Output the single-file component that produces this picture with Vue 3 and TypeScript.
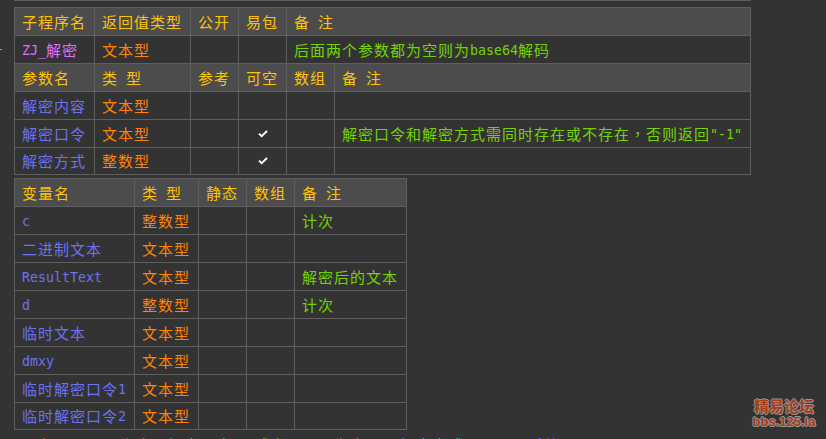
<script setup lang="ts">
interface Seg { text: string; kind: 'cjk' | 'latin' | 'punct' }
interface Cell { segs?: Seg[]; tone?: string; check?: boolean }
type Row = Cell[]

function split(text: string): Seg[] {
  const parts = text.match(/[\x20-\x7e]+|\uFF0C|[^\x20-\x7e\uFF0C]+/g) ?? []
  return parts.map((p): Seg => ({
    text: p,
    kind: /^[\x20-\x7e]/.test(p) ? 'latin' : p === '\uFF0C' ? 'punct' : 'cjk',
  }))
}
const cell = (tone: string) => (t: string): Cell => ({ segs: split(t), tone })
const sub = cell('sub')
const head = cell('head')
const type = cell('type')
const name = cell('name')
const note = cell('note')
const none: Cell = {}
const tick: Cell = { check: true }

const subHeader: Row = ['子程序名', '返回值类型', '公开', '易包', '备 注'].map(head)
const subRow: Row = [sub('ZJ_解密'), type('文本型'), none, none, note('后面两个参数都为空则为base64解码')]
const paramHeader: Row = ['参数名', '类 型', '参考', '可空', '数组', '备 注'].map(head)
const paramRows: Row[] = [
  [name('解密内容'), type('文本型'), none, none, none, none],
  [name('解密口令'), type('文本型'), none, tick, none, note('解密口令和解密方式需同时存在或不存在\uFF0C否则返回"-1"')],
  [name('解密方式'), type('整数型'), none, tick, none, none],
]
const varHeader: Row = ['变量名', '类 型', '静态', '数组', '备 注'].map(head)
const varRows: Row[] = [
  [name('c'), type('整数型'), none, none, note('计次')],
  [name('二进制文本'), type('文本型'), none, none, none],
  [name('ResultText'), type('文本型'), none, none, note('解密后的文本')],
  [name('d'), type('整数型'), none, none, note('计次')],
  [name('临时文本'), type('文本型'), none, none, none],
  [name('dmxy'), type('文本型'), none, none, none],
  [name('临时解密口令1'), type('文本型'), none, none, none],
  [name('临时解密口令2'), type('文本型'), none, none, none],
]
const clipped = [
  { text: '如果', tone: 'red', gap: 0 },
  { text: '是否为空', tone: 'red', gap: 16 },
  { text: '解密口令', tone: 'cyan', gap: 16 },
  { text: '或者', tone: 'lime', gap: 23 },
  { text: '是否为空', tone: 'red', gap: 15 },
  { text: '解密方式', tone: 'cyan', gap: 34 },
  { text: '赋值', tone: 'violet', gap: 64 },
]
</script>

<template>
  <main class="page">
    <div class="top-rule"></div>
    <span class="tick-mark"></span>

    <section class="block sub-block">
      <div class="row cols-sub header">
        <div v-for="(c, i) in subHeader" :key="i" class="cell" :class="c.tone"><span v-for="(s, j) in c.segs" :key="j" :class="s.kind">{{ s.text }}</span></div>
      </div>
      <div class="row cols-sub">
        <div v-for="(c, i) in subRow" :key="i" class="cell" :class="c.tone"><span v-for="(s, j) in c.segs" :key="j" :class="s.kind">{{ s.text }}</span></div>
      </div>
      <div class="row cols-param header">
        <div v-for="(c, i) in paramHeader" :key="i" class="cell" :class="c.tone"><span v-for="(s, j) in c.segs" :key="j" :class="s.kind">{{ s.text }}</span></div>
      </div>
      <div v-for="(r, ri) in paramRows" :key="ri" class="row cols-param">
        <div v-for="(c, i) in r" :key="i" class="cell" :class="[c.tone, { center: c.check }]">
          <svg v-if="c.check" class="check" width="10" height="8" viewBox="0 0 10 8"><path d="M1 3.6 L3.7 6.2 L9 1" fill="none" stroke="#fff" stroke-width="2"/></svg>
          <span v-for="(s, j) in c.segs" :key="j" :class="s.kind">{{ s.text }}</span>
        </div>
      </div>
    </section>

    <section class="block var-block">
      <div class="row cols-var header">
        <div v-for="(c, i) in varHeader" :key="i" class="cell" :class="c.tone"><span v-for="(s, j) in c.segs" :key="j" :class="s.kind">{{ s.text }}</span></div>
      </div>
      <div v-for="(r, ri) in varRows" :key="ri" class="row cols-var">
        <div v-for="(c, i) in r" :key="i" class="cell" :class="c.tone"><span v-for="(s, j) in c.segs" :key="j" :class="s.kind">{{ s.text }}</span></div>
      </div>
    </section>

    <div class="clipped-line">
      <span v-for="(c, i) in clipped" :key="i" class="cjk" :class="c.tone" :style="{ marginLeft: c.gap + 'px' }">{{ c.text }}</span>
    </div>

    <div class="watermark"><span>精易论坛</span><span>bbs.125.la</span></div>
  </main>
</template>

<style scoped>
.page {
  position: relative;
  width: 826px;
  height: 439px;
  overflow: hidden;
  background: #333333;
  font-family: "DejaVu Sans Mono", "Noto Sans CJK SC", monospace;
  font-size: 14px;
}
.top-rule { height: 1px; margin-left: 14px; width: 737px; background: #5f5f5f; }
.tick-mark { position: absolute; left: 0; top: 49px; width: 2px; height: 1px; background: #6fd000; }
.block { margin-left: 14px; border: 1px solid #5f5f5f; }
.sub-block { width: 735px; margin-top: 6px; }
.var-block { width: 391px; margin-top: 3px; }
.row { display: grid; height: 28px; border-top: 1px solid #5f5f5f; box-sizing: border-box; }
.row:first-child { border-top: 0; height: 27px; }
.row:last-child { height: 27px; }
.header { background: #4c4c4c; }
.cols-sub { grid-template-columns: 79px 96px 48px 48px 1fr; }
.cols-param { grid-template-columns: 79px 96px 48px 48px 48px 1fr; }
.cols-var { grid-template-columns: 119px 64px 48px 48px 1fr; }
.cell {
  display: flex;
  align-items: center;
  padding-left: 7px;
  border-left: 1px solid #5f5f5f;
  white-space: pre;
  min-width: 0;
}
.cell:first-child { border-left: 0; }
.center { justify-content: center; padding-left: 0; }
.cjk {
  font-family: "Noto Sans CJK SC", sans-serif;
  font-size: 15px;
  letter-spacing: 1px;
  line-height: 20px;
}
.punct {
  font-family: "Noto Sans CJK TC", sans-serif;
  font-size: 15px;
  letter-spacing: 1px;
  line-height: 20px;
}
.latin {
  font-family: "DejaVu Sans Mono", monospace;
  font-size: 13.3px;
  line-height: 20px;
  padding-top: 2px;
}
.head { color: #ffc400; }
.sub { color: #e46cff; }
.type { color: #ff8400; }
.name { color: #6c72f4; }
.note { color: #74d400; }
.clipped-line {
  position: absolute;
  left: 40px;
  top: 435px;
  display: flex;
  line-height: 20px;
}
.red { color: #ff6060; }
.cyan { color: #40d8c0; }
.lime { color: #90c000; }
.violet { color: #a050ff; }
.watermark {
  position: absolute;
  left: 751px;
  top: 398px;
  display: flex;
  flex-direction: column;
  align-items: center;
  width: 66px;
  font-family: "Liberation Sans", "Noto Sans CJK SC", sans-serif;
  font-weight: 700;
  color: #a83a1c;
  font-size: 15px;
  line-height: 17px;
  text-shadow: 1px 0 0 #999, -1px 0 0 #999, 0 1px 0 #999, 0 -1px 0 #999;
}
.watermark span:last-child { font-size: 13px; line-height: 13px; }
</style>
